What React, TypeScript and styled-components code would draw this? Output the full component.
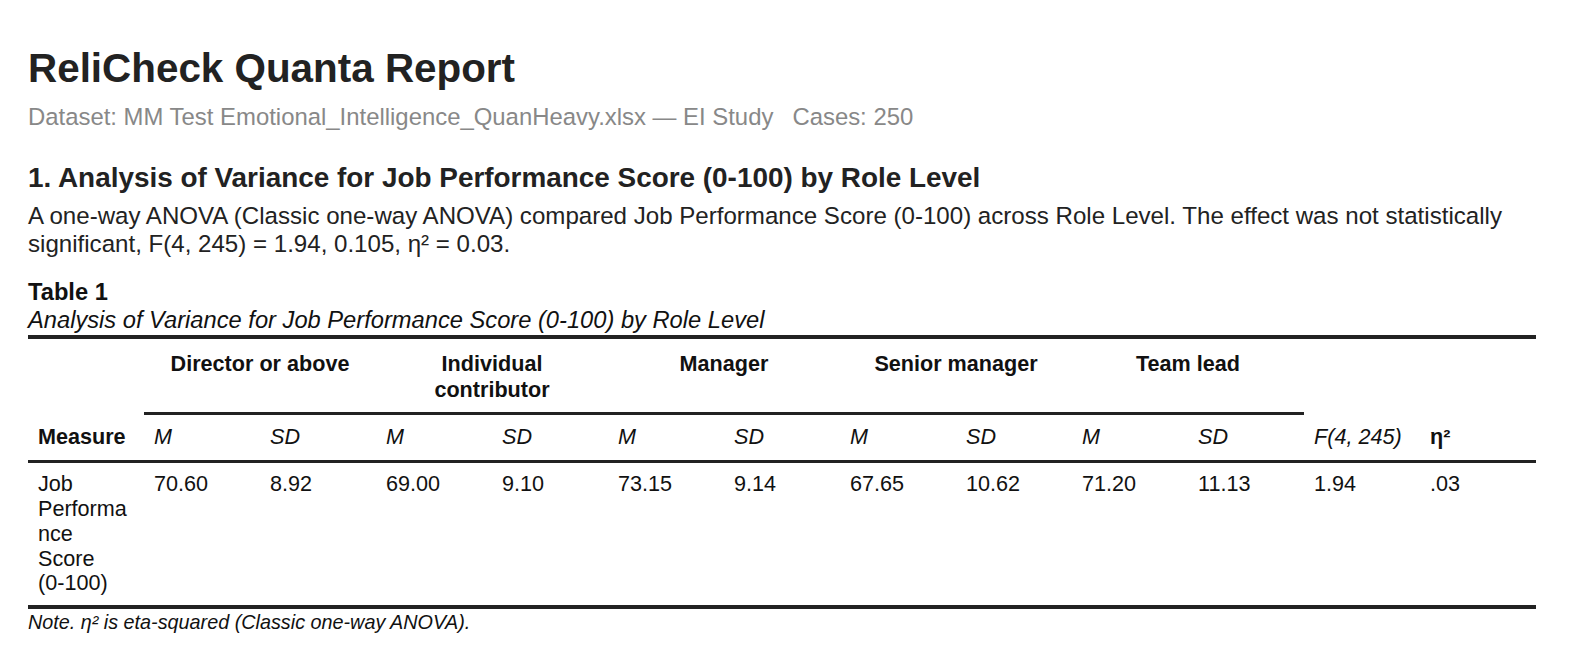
import React from "react";
import styled, { createGlobalStyle } from "styled-components";

const GlobalStyle = createGlobalStyle`
  html, body { margin: 0; padding: 0; background: #ffffff; }
  body {
    font-family: "Liberation Sans", Helvetica, Arial, sans-serif;
    color: #1f1f1f;
  }
`;

const Page = styled.main`
  padding: 45px 56px 0 28px;
`;

const Title = styled.h1`
  margin: 0;
  font-size: 40.4px;
  font-weight: 700;
  line-height: 46px;
  color: #222;
`;

const Meta = styled.div`
  margin-top: 12px;
  font-size: 23.9px;
  line-height: 27.6px;
  color: #888;
`;

const MetaItem = styled.span<{ $gap?: boolean }>`
  margin-left: ${(p) => (p.$gap ? "19px" : "0")};
`;

const SectionTitle = styled.h2`
  margin: 31px 0 0;
  font-size: 27.9px;
  font-weight: 700;
  line-height: 32px;
  color: #222;
`;

const Paragraph = styled.p`
  margin: 8px 0 0;
  font-size: 24.1px;
  line-height: 28.6px;
  color: #222;
`;

const Caption = styled.div`
  margin-top: 19px;
  font-size: 23.7px;
  line-height: 28.4px;
  color: #111;
`;

const CaptionLabel = styled.div`
  font-weight: 700;
`;

const CaptionTitle = styled.div`
  font-style: italic;
`;

const Table = styled.table`
  width: 100%;
  table-layout: fixed;
  border-collapse: collapse;
  border-top: 4px solid #222;
  border-bottom: 4px solid #222;
  font-size: 21.6px;
  color: #111;
`;

const HeadCell = styled.th<{
  $span?: boolean;
  $italic?: boolean;
  $bold?: boolean;
  $rule?: boolean;
}>`
  padding: ${(p) => (p.$span ? "12px 10px 9px" : "10px 10px")};
  text-align: ${(p) => (p.$span ? "center" : "left")};
  vertical-align: ${(p) => (p.$span ? "top" : "bottom")};
  font-weight: ${(p) => (p.$bold ? 700 : 400)};
  font-style: ${(p) => (p.$italic ? "italic" : "normal")};
  line-height: ${(p) => (p.$span ? "26.4px" : "24.8px")};
  border-bottom: ${(p) => (p.$rule ? "3px solid #222" : "none")};
  overflow-wrap: anywhere;
`;

const Cell = styled.td`
  padding: 9px 10px;
  text-align: left;
  vertical-align: top;
  line-height: 24.8px;
  overflow-wrap: anywhere;
`;

const NoBreak = styled.span`
  white-space: nowrap;
`;

const Note = styled.div`
  margin-top: 2px;
  font-size: 19.8px;
  line-height: 23px;
  font-style: italic;
  color: #111;
`;

const groups = [
  "Director or above",
  "Individual contributor",
  "Manager",
  "Senior manager",
  "Team lead",
];

const values = [
  "70.60",
  "8.92",
  "69.00",
  "9.10",
  "73.15",
  "9.14",
  "67.65",
  "10.62",
  "71.20",
  "11.13",
  "1.94",
  ".03",
];

export default function App() {
  return (
    <>
      <GlobalStyle />
      <Page>
        <Title>ReliCheck Quanta Report</Title>
        <Meta>
          <MetaItem>
            Dataset: MM Test Emotional_Intelligence_QuanHeavy.xlsx — EI Study
          </MetaItem>
          <MetaItem $gap>Cases: 250</MetaItem>
        </Meta>

        <SectionTitle>
          1. Analysis of Variance for Job Performance Score (0-100) by Role
          Level
        </SectionTitle>
        <Paragraph>
          A one-way ANOVA (Classic one-way ANOVA) compared Job Performance Score
          (0-100) across Role Level. The effect was not statistically
          significant, F(4, 245) = 1.94, 0.105, η² = 0.03.
        </Paragraph>

        <Caption>
          <CaptionLabel>Table 1</CaptionLabel>
          <CaptionTitle>
            Analysis of Variance for Job Performance Score (0-100) by Role Level
          </CaptionTitle>
        </Caption>

        <Table>
          <thead>
            <tr>
              <HeadCell rowSpan={2} $bold $rule>
                Measure
              </HeadCell>
              {groups.map((g) => (
                <HeadCell key={g} colSpan={2} $span $bold $rule>
                  {g}
                </HeadCell>
              ))}
              <HeadCell rowSpan={2} $italic $rule>
                F(4, 245)
              </HeadCell>
              <HeadCell rowSpan={2} $bold $rule>
                η²
              </HeadCell>
            </tr>
            <tr>
              {groups.map((g) => (
                <React.Fragment key={g}>
                  <HeadCell $italic $rule>
                    M
                  </HeadCell>
                  <HeadCell $italic $rule>
                    SD
                  </HeadCell>
                </React.Fragment>
              ))}
            </tr>
          </thead>
          <tbody>
            <tr>
              <Cell>
                Job Performance Score <NoBreak>(0-100)</NoBreak>
              </Cell>
              {values.map((v, i) => (
                <Cell key={i}>{v}</Cell>
              ))}
            </tr>
          </tbody>
        </Table>
        <Note>Note. η² is eta-squared (Classic one-way ANOVA).</Note>
      </Page>
    </>
  );
}
